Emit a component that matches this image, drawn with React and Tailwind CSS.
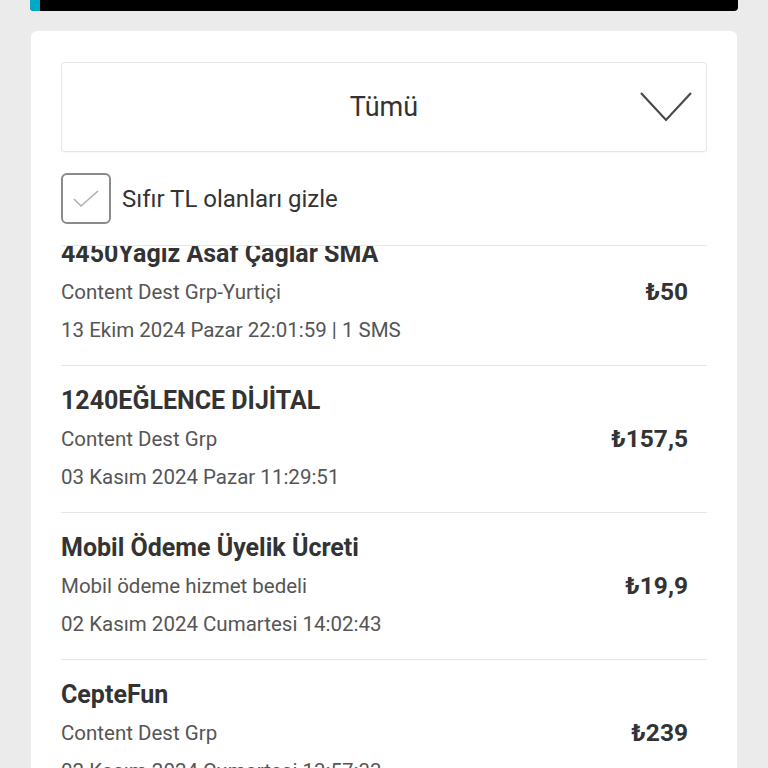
import React from "react";

const items = [
  {
    title: "4450Yağız Asaf Çağlar SMA",
    sub: "Content Dest Grp-Yurtiçi",
    date: "13 Ekim 2024 Pazar 22:01:59 | 1 SMS",
    amount: "₺50",
  },
  {
    title: "1240EĞLENCE DİJİTAL",
    sub: "Content Dest Grp",
    date: "03 Kasım 2024 Pazar 11:29:51",
    amount: "₺157,5",
  },
  {
    title: "Mobil Ödeme Üyelik Ücreti",
    sub: "Mobil ödeme hizmet bedeli",
    date: "02 Kasım 2024 Cumartesi 14:02:43",
    amount: "₺19,9",
  },
  {
    title: "CepteFun",
    sub: "Content Dest Grp",
    date: "02 Kasım 2024 Cumartesi 13:57:33",
    amount: "₺239",
  },
];

const App = () => {
  return (
    <div
      className="h-[768px] overflow-hidden bg-[#ebebeb]"
      style={{ fontFamily: "Roboto, 'Noto Sans', sans-serif" }}
    >
      {/* top bar */}
      <div className="mx-[30px] flex h-[11px] overflow-hidden rounded-b-[4px] bg-black">
        <div className="w-[10px] bg-[#00a9c6]" />
      </div>

      {/* card */}
      <div className="mx-[31px] mt-[20px] h-[800px] rounded-t-[6px] bg-white px-[30px] pt-[31px]">
        {/* dropdown */}
        <div className="relative flex h-[90px] items-center justify-center rounded-[3px] border border-[#e6e6e6] shadow-[0_1px_2px_rgba(0,0,0,0.04)]">
          <span className="text-[27px] text-[#333]">Tümü</span>
          <svg
            className="absolute right-[13px] top-[28px]"
            width="54"
            height="32"
            viewBox="0 0 54 32"
            fill="none"
          >
            <path d="M2 2 L27 29 L52 2" stroke="#4a4a4a" strokeWidth="2.2" />
          </svg>
        </div>

        {/* checkbox */}
        <div className="mt-[21px] flex items-center gap-[11px]">
          <div className="flex h-[51px] w-[50px] items-center justify-center rounded-[6px] border-2 border-[#8a8a8a]">
            <svg width="28" height="20" viewBox="0 0 28 20" fill="none">
              <path d="M2 10 L9 17 L26 2" stroke="#b0b0b0" strokeWidth="1.6" />
            </svg>
          </div>
          <span className="text-[24px] text-[#333]">Sıfır TL olanları gizle</span>
        </div>

        {/* list */}
        <div className="mt-[21px] overflow-hidden border-t border-[#e8e8e8]">
          {items.map((it, i) => (
            <div
              key={i}
              className={
                i === 0
                  ? "-mt-[11px] flex items-center pb-[16px] pr-[19px]"
                  : "flex items-center border-t border-[#e6e6e6] py-[16px] pr-[19px]"
              }
            >
              <div className="flex-1">
                <div className="text-[25px] font-bold leading-[38px] text-[#333]">
                  {it.title}
                </div>
                <div className="text-[20.5px] leading-[38px] text-[#555]">{it.sub}</div>
                <div className="text-[20.5px] leading-[38px] text-[#555]">{it.date}</div>
              </div>
              <div className="text-[24.5px] font-bold text-[#333]">{it.amount}</div>
            </div>
          ))}
        </div>
      </div>
    </div>
  );
};

export default App;
